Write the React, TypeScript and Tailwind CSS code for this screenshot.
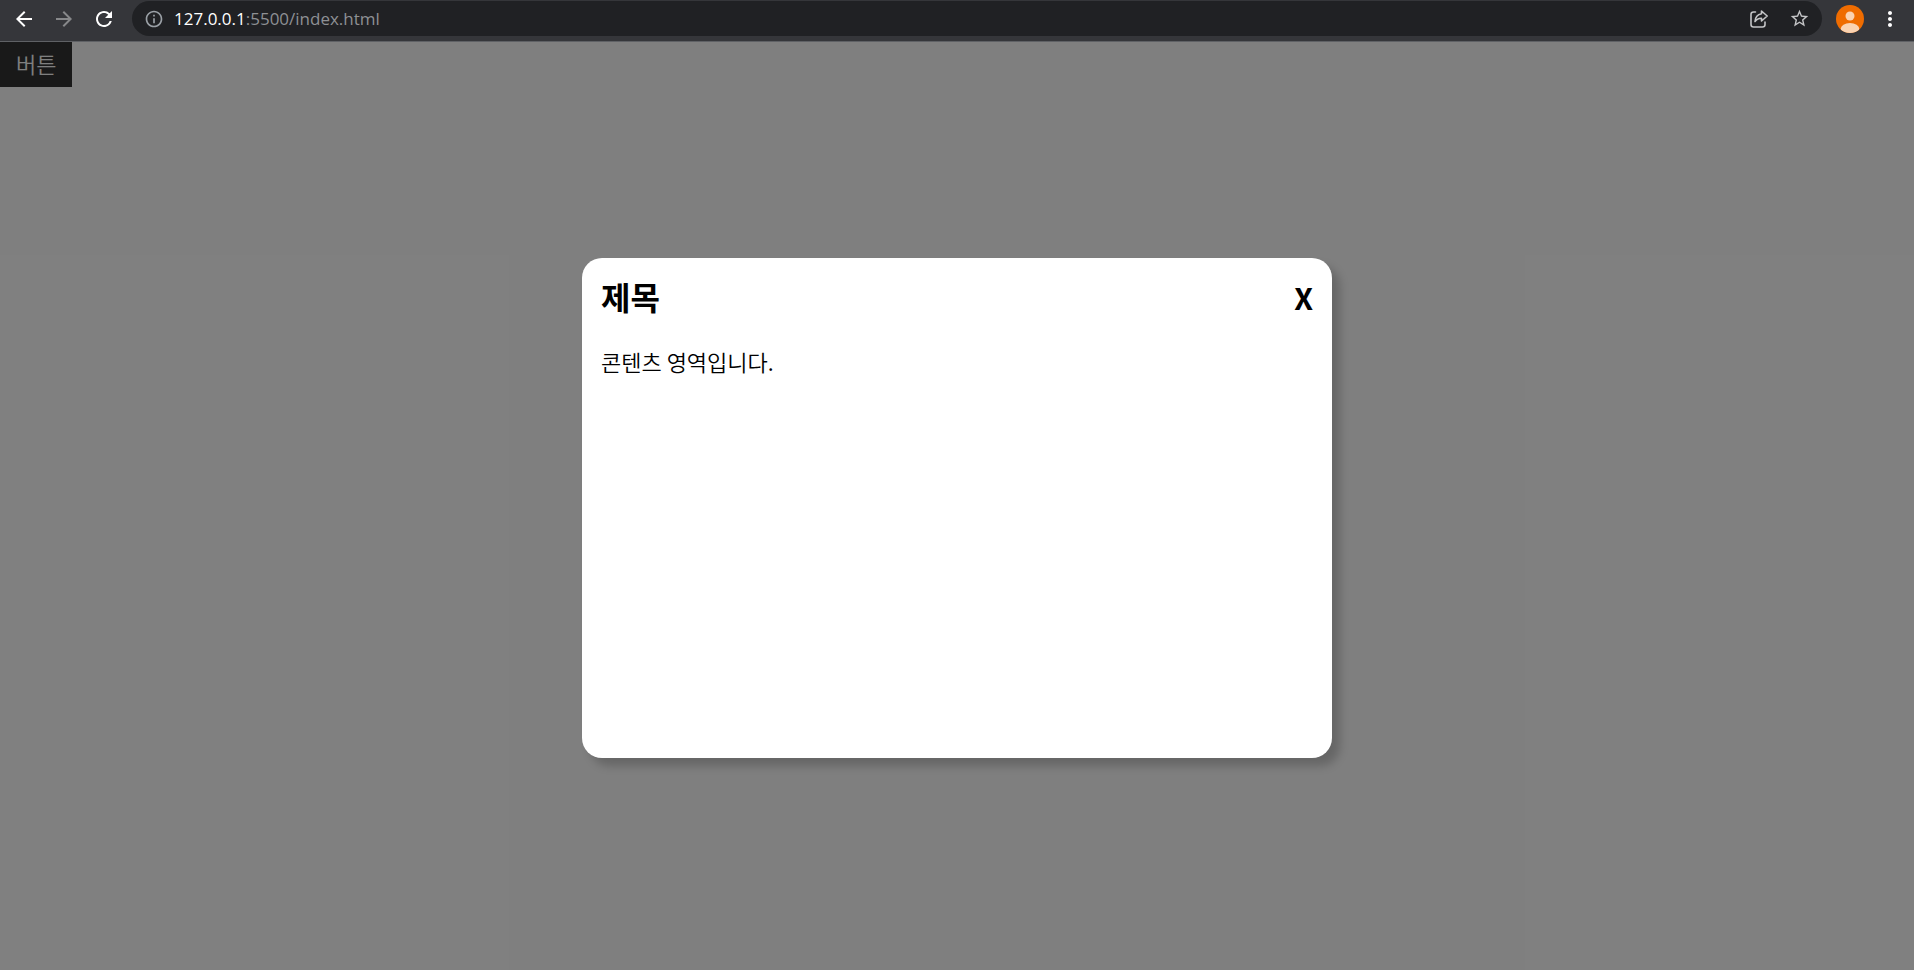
import { useState } from 'react';
import { MdArrowBack, MdArrowForward, MdInfoOutline, MdMoreVert, MdRefresh, MdStarBorder } from 'react-icons/md';

function ShareIcon() {
  return (
    <svg viewBox="0 0 20 20" className="size-5" fill="none" stroke="currentColor" strokeWidth="1.6" strokeLinejoin="round">
      <path d="M6.5 3H4.5A2.5 2.5 0 0 0 2 5.5v10A2.5 2.5 0 0 0 4.5 18h9a2.5 2.5 0 0 0 2.5-2.5V13" strokeLinecap="round" />
      <path d="M12.5 2 18.2 7l-5.7 5V9.2C9.5 9.2 7.5 10.2 6 12.5c.3-4.2 2.7-7 6.5-7.7z" />
    </svg>
  );
}

function Avatar() {
  return (
    <svg viewBox="0 0 28 28" className="size-7">
      <defs>
        <clipPath id="avatar-clip">
          <circle cx="14" cy="14" r="14" />
        </clipPath>
      </defs>
      <g clipPath="url(#avatar-clip)">
        <rect width="28" height="28" fill="#ef6c00" />
        <circle cx="14" cy="11" r="4.5" fill="#fad3b2" />
        <ellipse cx="14" cy="24" rx="9.3" ry="6" fill="#fad3b2" />
      </g>
    </svg>
  );
}

function BrowserBar() {
  return (
    <header className="flex h-[42px] items-start border-b border-[#5f6165] bg-[#35363a] px-3 pt-px font-['Open_Sans',sans-serif]">
      <nav className="flex h-[35px] items-center gap-4 pr-4 text-white">
        <button type="button" aria-label="Back"><MdArrowBack size={24} /></button>
        <button type="button" aria-label="Forward" className="text-[#87888a]"><MdArrowForward size={24} /></button>
        <button type="button" aria-label="Reload"><MdRefresh size={24} /></button>
      </nav>
      <div className="flex h-[35px] flex-1 items-center rounded-full bg-[#202124] px-3 text-[#9aa0a6]">
        <MdInfoOutline size={20} />
        <p className="ml-2.5 flex-1 text-[17px] leading-6 text-[#8e9094]">
          <span className="text-white">127.0.0.1</span>:5500/index.html
        </p>
        <div className="flex items-center gap-5 text-[#c4c5c7]">
          <button type="button" aria-label="Share"><ShareIcon /></button>
          <button type="button" aria-label="Bookmark"><MdStarBorder size={21} /></button>
        </div>
      </div>
      <div className="flex h-[35px] items-center gap-3.5 pl-3.5 text-white">
        <button type="button" aria-label="Profile"><Avatar /></button>
        <button type="button" aria-label="Menu"><MdMoreVert size={24} /></button>
      </div>
    </header>
  );
}

function Modal({ onClose }: { onClose: () => void }) {
  return (
    <div className="absolute inset-0 flex items-center justify-center bg-black/50 pt-1">
      <section
        role="dialog"
        aria-labelledby="modal-title"
        className="min-h-[500px] w-[750px] max-w-full rounded-[20px] bg-white px-[19px] py-5 text-black shadow-[8px_8px_10px_rgba(0,0,0,0.2)]"
      >
        <div className="flex items-baseline justify-between text-[32px] leading-9 font-bold">
          <h2 id="modal-title">제목</h2>
          <button type="button" onClick={onClose} className="text-3xl leading-9">X</button>
        </div>
        <p className="mt-[30px] text-[22px] leading-8 font-[350]">콘텐츠 영역입니다.</p>
      </section>
    </div>
  );
}

export default function App() {
  const [open, setOpen] = useState(true);

  return (
    <div className="flex min-h-screen flex-col">
      <BrowserBar />
      <main className="relative flex-1 bg-white font-['Noto_Sans_CJK_KR',sans-serif]">
        <button
          type="button"
          onClick={() => setOpen(true)}
          className="block bg-[#333333] px-4 pt-[5px] pb-2 text-[22px] leading-8 font-[350] text-white"
        >
          버튼
        </button>
        {open && <Modal onClose={() => setOpen(false)} />}
      </main>
    </div>
  );
}
